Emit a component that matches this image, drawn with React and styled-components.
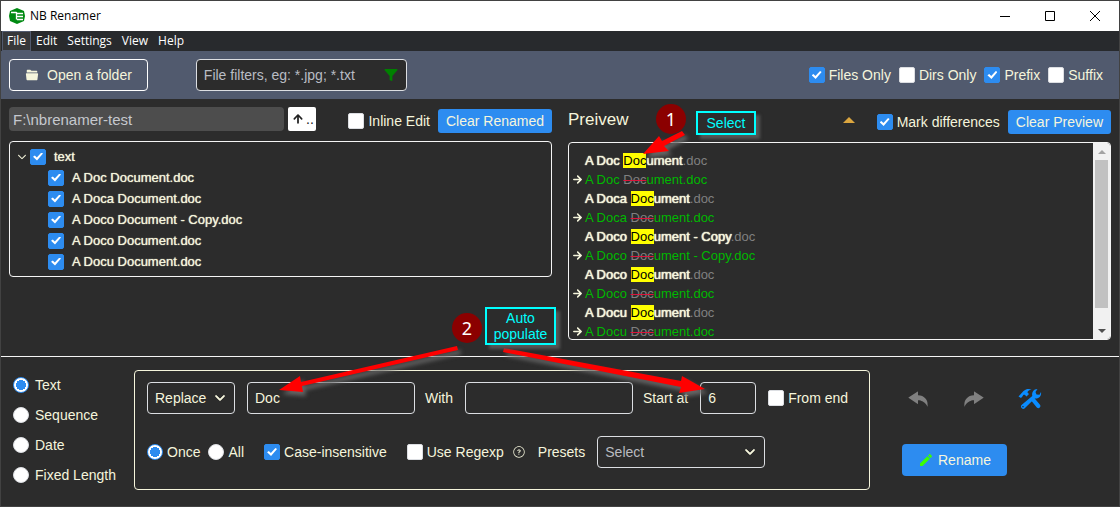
import React from "react";
import styled, { createGlobalStyle, css } from "styled-components";
import {
  IoIosFolderOpen,
  IoIosFunnel,
  IoMdArrowRoundUp,
  IoMdArrowRoundForward,
  IoIosArrowDown,
  IoIosHelpCircleOutline,
  IoIosUndo,
  IoIosRedo,
  IoMdCreate,
} from "react-icons/io";

const color = {
  bg: "#2c2c2c",
  bar: "#515a6e",
  text: "#f5f5dc",
  line: "#f5f5f5",
  blue: "#2d8cf0",
};

const Global = createGlobalStyle`
  *, *::before, *::after { box-sizing: border-box; }
  body { margin: 0; background: ${color.bg}; }
  body, button, input, select {
    font-family: "Liberation Sans", Arial, sans-serif;
    font-size: 14px;
  }
`;

const Window = styled.div`
  position: relative;
  display: flex;
  flex-direction: column;
  min-height: 100vh;
  border: 1px solid #424242;
  background: ${color.bg};
  color: ${color.text};
  line-height: 16px;
`;

/* Title bar and menu */

const TitleBar = styled.header`
  display: flex;
  align-items: center;
  height: 30px;
  padding: 0 2px 0 8px;
  background: #fff;
  color: #000;
`;

const Title = styled.h1`
  flex: 1;
  margin: 0 0 0 5px;
  font: 400 12px/16px "Open Sans", "Noto Sans", sans-serif;
`;

const WindowButton = styled.button`
  display: grid;
  place-items: center;
  width: 45px;
  height: 30px;
  padding: 0;
  border: 0;
  background: none;
`;

const MenuBar = styled.nav`
  display: flex;
  height: 20px;
  padding-left: 1px;
  background: #282a2d;
`;

const MenuItem = styled.button`
  height: 20px;
  padding: 0 4px;
  border: 1px solid ${(p) => (p.$active ? "#515a6e" : "transparent")};
  background: ${(p) => (p.$active ? "#37383a" : "none")};
  color: #fff;
  font: 400 12px/16px "Open Sans", "Noto Sans", sans-serif;
`;

/* Shared controls */

const Check = styled.input.attrs({ type: "checkbox" })`
  appearance: none;
  display: grid;
  place-items: center;
  flex: none;
  width: 16px;
  height: 16px;
  margin: 0;
  border: 1px solid #dcdee2;
  border-radius: 2px;
  background: #fff;
  &:checked {
    border-color: ${color.blue};
    background: ${color.blue};
  }
  &:checked::after {
    content: "";
    width: 10px;
    height: 8px;
    background: #fff;
    clip-path: polygon(0 52%, 18% 38%, 38% 62%, 84% 0, 100% 14%, 40% 100%);
  }
`;

const Radio = styled.input.attrs({ type: "radio" })`
  appearance: none;
  flex: none;
  width: 16px;
  height: 16px;
  margin: 0;
  border: 1px solid #dcdee2;
  border-radius: 50%;
  background: #fff;
  &:checked {
    border-color: ${color.blue};
    background: radial-gradient(circle, ${color.blue} 5px, #fff 5px);
  }
`;

const Option = styled.label`
  display: flex;
  align-items: center;
  gap: ${(p) => p.$gap || 4}px;
  white-space: nowrap;
`;

const TreeOption = styled(Option)`
  gap: 8px;
`;

const fieldBox = css`
  height: 32px;
  padding: 0 7px;
  border: 1px solid #dcdee2;
  border-radius: 4px;
  background: ${color.bg};
  color: ${color.text};
  outline: 0;
`;

const Field = styled.input`
  ${fieldBox}
  width: ${(p) => p.$width}px;
`;

const SelectWrap = styled.span`
  display: grid;
  align-items: center;
  width: ${(p) => p.$width}px;
  > * {
    grid-area: 1 / 1;
  }
  > svg {
    justify-self: end;
    margin-right: 8px;
    pointer-events: none;
    stroke: currentColor;
    stroke-width: 24px;
  }
`;

const SelectBox = styled.select`
  ${fieldBox}
  appearance: none;
  width: 100%;
  ${(p) => p.$muted && "color: #b9bbc0;"}
`;

const BlueButton = styled.button`
  display: flex;
  align-items: center;
  justify-content: center;
  gap: 4px;
  height: ${(p) => (p.$large ? 32 : 24)}px;
  padding: 0 ${(p) => (p.$large ? 16 : 8)}px;
  border: 0;
  border-radius: ${(p) => (p.$large ? 4 : 3)}px;
  background: ${color.blue};
  color: ${color.text};
  white-space: nowrap;
`;

/* Toolbar */

const Toolbar = styled.div`
  display: flex;
  align-items: center;
  height: 48px;
  padding: 0 16px 0 8px;
  background: ${color.bar};
`;

const OpenButton = styled.button`
  display: flex;
  align-items: center;
  gap: 8px;
  height: 32px;
  padding: 0 15px;
  border: 1px solid #fff;
  border-radius: 4px;
  background: none;
  color: ${color.text};
`;

const FilterBox = styled.label`
  ${fieldBox}
  display: flex;
  align-items: center;
  width: 211px;
  margin-left: 48px;
  input {
    flex: 1;
    min-width: 0;
    padding: 0;
    border: 0;
    outline: 0;
    background: none;
    color: ${color.text};
  }
  input::placeholder {
    color: #b9bdc4;
    opacity: 1;
  }
`;

const FilterOptions = styled.div`
  display: flex;
  gap: 8px;
  margin-left: auto;
`;

/* File tree and preview */

const Panes = styled.main`
  display: grid;
  grid-template-columns: 1fr 1fr;
  gap: 16px;
  padding: 8px 8px 16px;
  border-bottom: 1px solid ${color.line};
`;

const Pane = styled.section`
  min-width: 0;
  padding-top: ${(p) => p.$top || 0}px;
`;

const PaneHead = styled.div`
  display: flex;
  align-items: flex-end;
  height: 26px;
  margin-bottom: 8px;
`;

const HeadOption = styled(Option)`
  height: 24px;
  margin-right: 8px;
`;

const PathGroup = styled.div`
  display: flex;
  flex: 1;
  align-self: flex-start;
  gap: 4px;
  margin-right: 32px;
`;

const PathInput = styled.input`
  flex: 1;
  min-width: 0;
  height: 24px;
  padding: 0 4px;
  border: 0;
  border-radius: 4px;
  background: #4d4d4d;
  color: #c5c8ce;
  font-size: 15px;
`;

const UpButton = styled.button`
  display: flex;
  align-items: center;
  justify-content: center;
  gap: 1px;
  width: 28px;
  height: 24px;
  padding: 0;
  border: 0;
  border-radius: 2px;
  background: #fff;
  color: #222;
`;

const PreviewTitle = styled.h2`
  flex: 1;
  margin: 0;
  font-size: 17px;
  font-weight: 400;
  line-height: 28px;
`;

const CollapseButton = styled.button`
  display: flex;
  align-items: center;
  height: 28px;
  margin-right: 22px;
  padding: 0;
  border: 0;
  background: none;
`;

const Tree = styled.ul`
  margin: 0;
  padding: 4px 6px;
  border: 1px solid ${color.line};
  border-radius: 4px;
  list-style: none;
  font-size: 13px;
  text-shadow: 0 0 1px ${color.text};
`;

const TreeRow = styled.li`
  display: flex;
  align-items: center;
  gap: 2px;
  height: 21px;
  padding-left: ${(p) => (p.$child ? 32 : 0)}px;
`;

const Toggle = styled.button`
  display: flex;
  padding: 0;
  border: 0;
  background: none;
  color: ${color.text};
  stroke: currentColor;
  stroke-width: 32px;
`;

const Preview = styled.div`
  display: flex;
  max-height: 198px;
  border: 1px solid ${color.line};
  border-radius: 4px;
  overflow: hidden;
  font-size: 13px;
`;

const PreviewList = styled.ul`
  flex: 1;
  margin: 0;
  padding: 8px 0 0 2px;
  list-style: none;
  overflow: hidden;
`;

const PreviewRow = styled.li`
  display: grid;
  grid-template-columns: 14px 1fr;
  align-items: center;
  height: 19px;
  line-height: 15px;
`;

const OldName = styled.span`
  grid-column: 2;
  text-shadow: 0 0 1px ${color.text}, 0 0 1px ${color.text};
  mark {
    background: #ff0;
    color: #000;
    text-shadow: none;
  }
`;

const Ext = styled.span`
  color: #808080;
  text-shadow: none;
`;

const NewName = styled.span`
  color: #00b800;
  del {
    color: #808080;
    text-decoration-line: line-through;
    text-decoration-color: #dc143c;
    text-decoration-thickness: 1px;
  }
`;

const ScrollBar = styled.div`
  display: flex;
  flex-direction: column;
  width: 17px;
  padding: 0 2px;
  background: #f1f1f1;
`;

const ScrollButton = styled.button`
  display: grid;
  place-items: center;
  height: 17px;
  padding: 0;
  border: 0;
  background: none;
`;

const Thumb = styled.div`
  height: 148px;
  margin-bottom: auto;
  background: #c1c1c1;
`;

/* Rename rules */

const Rules = styled.footer`
  display: flex;
  align-items: flex-start;
  padding: 13px 0 16px;
`;

const Modes = styled.div`
  width: 133px;
  padding-left: 12px;
  > label {
    height: 30px;
  }
`;

const RuleBox = styled.div`
  display: flex;
  flex: 1;
  flex-direction: column;
  gap: 22px;
  padding: 11px 12px 21px;
  border: 1px solid ${color.text};
  border-radius: 4px;
`;

const RuleRow = styled.div`
  display: flex;
  align-items: center;
  gap: 12px;
`;

const FieldGroup = styled.div`
  display: flex;
  align-items: center;
  gap: 10px;
`;

const Labelled = styled.label`
  display: flex;
  align-items: center;
  gap: 12px;
  white-space: nowrap;
`;

const Choices = styled.div`
  display: flex;
  gap: 8px;
  margin-right: 8px;
`;

const RegexpGroup = styled.div`
  display: flex;
  align-items: center;
  gap: 8px;
  margin-left: 8px;
`;

const Actions = styled.div`
  display: flex;
  flex-direction: column;
  align-items: flex-start;
  gap: 29px;
  width: 249px;
  padding: 13px 0 0 32px;
`;

const IconRow = styled.div`
  display: flex;
  gap: 24px;
`;

const IconButton = styled.button`
  display: grid;
  place-items: center;
  width: 32px;
  height: 32px;
  padding: 0;
  border: 0;
  background: none;
  color: ${(p) => (p.$on ? "#0a8cff" : "#808080")};
`;

/* Tutorial notes that lie over the window */

const Notes = styled.div`
  position: absolute;
  inset: -1px;
  overflow: hidden;
  pointer-events: none;
`;

const Arrows = styled.svg`
  position: absolute;
  top: 0;
  left: 0;
  filter: drop-shadow(3px 4px 2px #666);
`;

const Step = styled.span`
  position: absolute;
  top: ${(p) => p.$y}px;
  left: ${(p) => p.$x}px;
  width: 30px;
  border-radius: 50%;
  background: #8b0000;
  color: #fff;
  font: 400 18px/30px "Noto Sans", "Open Sans", sans-serif;
  text-align: center;
`;

const Callout = styled.span`
  position: absolute;
  top: ${(p) => p.$y}px;
  left: ${(p) => p.$x}px;
  width: ${(p) => p.$width}px;
  padding: ${(p) => p.$pad}px 0;
  border: 2px solid #0ff;
  background: ${color.bg};
  box-shadow: 4px 4px 3px #555;
  color: #0ff;
  text-align: center;
`;

function CheckOption({ children, checked, as: Wrap = Option }) {
  return (
    <Wrap>
      <Check defaultChecked={checked} />
      {children}
    </Wrap>
  );
}

function Logo() {
  return (
    <svg width="16" height="18" viewBox="0 0 16 18">
      <path d="M8 1 15 4 16 9 15 14 8 17 1 14 0 9 1 4z" fill="#008a12" />
      <path
        d="M2 5.500h5.500M7.500 5v7.500M8 6.500h6M8 9.500h6M8 12.500h6"
        stroke="#fff"
        strokeWidth="1.300"
        fill="none"
      />
    </svg>
  );
}

function ToolsIcon() {
  return (
    <svg width="24" height="22" viewBox="0 0 24 22" fill="currentColor">
      <path d="M0.500 8.500 5.500 3C8 0.500 11.500 0.500 13.500 1.500 11 2 9.500 3 9.500 4.500L11 6 8.500 8.500 7 7C6 6.500 5 7 4.800 8L3 10z" />
      <path d="M13.300 12.800 16.300 10l5.500 6.500a1.800 1.800 0 0 1-3 3z" />
      <path
        d="M3.500 17 14.300 8C13.500 4.500 15.500 1 19.500 1L17.500 4l1 2.600 3 .2L23 4c.8 4-2.500 7.300-6.300 6.500L6.500 20.500c-2 1.500-4.700-1.500-3-3.500zM4.900 18a.7.7 0 1 0 .1 0z"
        fillRule="evenodd"
      />
    </svg>
  );
}

const files = [
  { stem: "A Doc ", rest: "ument" },
  { stem: "A Doca ", rest: "ument" },
  { stem: "A Doco ", rest: "ument - Copy" },
  { stem: "A Doco ", rest: "ument" },
  { stem: "A Docu ", rest: "ument" },
];

export default function App() {
  return (
    <Window>
      <Global />
      <TitleBar>
        <Logo />
        <Title>NB Renamer</Title>
        <WindowButton aria-label="Minimize">
          <svg width="10" height="10" stroke="#000">
            <path d="M0 5.500h10" />
          </svg>
        </WindowButton>
        <WindowButton aria-label="Maximize">
          <svg width="10" height="10" stroke="#000" fill="none">
            <path d="M.5.5h9v9h-9z" />
          </svg>
        </WindowButton>
        <WindowButton aria-label="Close">
          <svg width="10" height="10" stroke="#000">
            <path d="M0 0 10 10M10 0 0 10" />
          </svg>
        </WindowButton>
      </TitleBar>

      <MenuBar>
        <MenuItem $active>File</MenuItem>
        <MenuItem>Edit</MenuItem>
        <MenuItem>Settings</MenuItem>
        <MenuItem>View</MenuItem>
        <MenuItem>Help</MenuItem>
      </MenuBar>

      <Toolbar>
        <OpenButton>
          <IoIosFolderOpen size={14} />
          Open a folder
        </OpenButton>
        <FilterBox>
          <input aria-label="File filters" placeholder="File filters, eg: *.jpg; *.txt" />
          <IoIosFunnel size={16} color="#008000" />
        </FilterBox>
        <FilterOptions>
          <CheckOption checked>Files Only</CheckOption>
          <CheckOption>Dirs Only</CheckOption>
          <CheckOption checked>Prefix</CheckOption>
          <CheckOption>Suffix</CheckOption>
        </FilterOptions>
      </Toolbar>

      <Panes>
        <Pane>
          <PaneHead>
            <PathGroup>
              <PathInput aria-label="Folder path" defaultValue="F:\nbrenamer-test" />
              <UpButton aria-label="Parent folder">
                <IoMdArrowRoundUp size={14} />
                ..
              </UpButton>
            </PathGroup>
            <CheckOption as={HeadOption}>Inline Edit</CheckOption>
            <BlueButton>Clear Renamed</BlueButton>
          </PaneHead>
          <Tree>
            <TreeRow>
              <Toggle aria-label="Collapse text">
                <IoIosArrowDown size={12} />
              </Toggle>
              <CheckOption as={TreeOption} checked>
                text
              </CheckOption>
            </TreeRow>
            {files.map((f, i) => (
              <TreeRow key={i} $child>
                <CheckOption as={TreeOption} checked>
                  {`${f.stem}Doc${f.rest}.doc`}
                </CheckOption>
              </TreeRow>
            ))}
          </Tree>
        </Pane>

        <Pane $top={1}>
          <PaneHead>
            <PreviewTitle>Preivew</PreviewTitle>
            <CollapseButton aria-label="Collapse preview">
              <svg width="12" height="6">
                <path d="M0 6 6 0l6 6z" fill="#dba63f" />
              </svg>
            </CollapseButton>
            <CheckOption as={HeadOption} checked>
              Mark differences
            </CheckOption>
            <BlueButton>Clear Preview</BlueButton>
          </PaneHead>
          <Preview>
            <PreviewList>
              {files.map((f, i) => (
                <React.Fragment key={i}>
                  <PreviewRow>
                    <OldName>
                      {f.stem}
                      <mark>Doc</mark>
                      {f.rest}
                      <Ext>.doc</Ext>
                    </OldName>
                  </PreviewRow>
                  <PreviewRow>
                    <IoMdArrowRoundForward size={13} />
                    <NewName>
                      {f.stem}
                      <del>Doc</del>
                      {f.rest}.doc
                    </NewName>
                  </PreviewRow>
                </React.Fragment>
              ))}
            </PreviewList>
            <ScrollBar>
              <ScrollButton aria-label="Scroll up">
                <svg width="8" height="4">
                  <path d="M0 4 4 0l4 4z" fill="#a3a3a3" />
                </svg>
              </ScrollButton>
              <Thumb />
              <ScrollButton aria-label="Scroll down">
                <svg width="8" height="4">
                  <path d="M0 0h8L4 4z" fill="#505050" />
                </svg>
              </ScrollButton>
            </ScrollBar>
          </Preview>
        </Pane>
      </Panes>

      <Rules>
        <Modes>
          {["Text", "Sequence", "Date", "Fixed Length"].map((mode, i) => (
            <Option key={mode} $gap={6}>
              <Radio name="mode" defaultChecked={i === 0} />
              {mode}
            </Option>
          ))}
        </Modes>

        <RuleBox>
          <RuleRow>
            <SelectWrap $width={88}>
              <SelectBox aria-label="Action">
                <option>Replace</option>
              </SelectBox>
              <IoIosArrowDown size={14} />
            </SelectWrap>
            <FieldGroup>
              <Field $width={168} aria-label="Find" defaultValue="Doc" />
              <Labelled>
                With
                <Field $width={168} />
              </Labelled>
              <Labelled>
                Start at
                <Field $width={56} defaultValue="6" />
              </Labelled>
            </FieldGroup>
            <CheckOption>From end</CheckOption>
          </RuleRow>
          <RuleRow>
            <Choices>
              <Option>
                <Radio name="scope" defaultChecked />
                Once
              </Option>
              <Option>
                <Radio name="scope" />
                All
              </Option>
            </Choices>
            <CheckOption checked>Case-insensitive</CheckOption>
            <RegexpGroup>
              <CheckOption>Use Regexp</CheckOption>
              <IoIosHelpCircleOutline size={14} />
            </RegexpGroup>
            <Labelled>
              Presets
              <SelectWrap $width={168}>
                <SelectBox $muted>
                  <option>Select</option>
                </SelectBox>
                <IoIosArrowDown size={14} />
              </SelectWrap>
            </Labelled>
          </RuleRow>
        </RuleBox>

        <Actions>
          <IconRow>
            <IconButton aria-label="Undo">
              <IoIosUndo size={22} />
            </IconButton>
            <IconButton aria-label="Redo">
              <IoIosRedo size={22} />
            </IconButton>
            <IconButton aria-label="Tools" $on>
              <ToolsIcon />
            </IconButton>
          </IconRow>
          <BlueButton $large>
            <IoMdCreate size={16} color="#3cff00" />
            Rename
          </BlueButton>
        </Actions>
      </Rules>

      <Notes>
        <Arrows width="1120" height="507" fill="#f00">
          <path d="M643 154 659 136 662 141 682 131 685 135 664 146 669 151z" />
          <path d="M279 390 300 376 301 382 457 346 458 350 302 386 303 392z" />
          <path d="M705 389 682 376 681 381 504 348 503 352 681 387 679 393z" />
        </Arrows>
        <Step $x={656} $y={104}>1</Step>
        <Step $x={452} $y={313}>2</Step>
        <Callout $x={696} $y={111} $width={60} $pad={2}>
          Select
        </Callout>
        <Callout $x={485} $y={307} $width={71} $pad={1}>
          Auto
          <br />
          populate
        </Callout>
      </Notes>
    </Window>
  );
}
